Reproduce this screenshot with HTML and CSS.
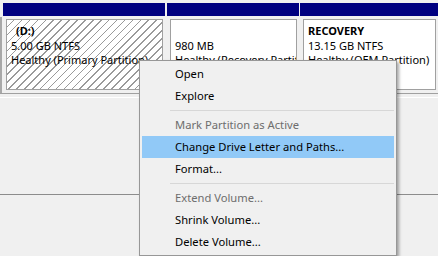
FILE: index.html
```html
<!DOCTYPE html>
<html>
<head>
<meta charset="utf-8">
<link rel="stylesheet" href="styles.css">
</head>
<body>
<div class="screen">
  <div class="disk">
    <div class="edge"></div>
    <div class="part p1">
      <div class="bar"></div>
      <div class="body">
        <div class="box hatched">
          <div class="line name indent">(D:)</div>
          <div class="line">5.00 GB NTFS</div>
          <div class="line">Healthy (Primary Partition)</div>
        </div>
      </div>
    </div>
    <div class="part p2">
      <div class="bar"></div>
      <div class="body">
        <div class="box">
          <div class="line name">&nbsp;</div>
          <div class="line">980 MB</div>
          <div class="line">Healthy (Recovery Partition)</div>
        </div>
      </div>
    </div>
    <div class="part p3">
      <div class="bar"></div>
      <div class="body">
        <div class="box">
          <div class="line name">RECOVERY</div>
          <div class="line">13.15 GB NTFS</div>
          <div class="line">Healthy (OEM Partition)</div>
        </div>
      </div>
    </div>
  </div>
  <div class="rule"></div>
  <div class="panel"></div>
  <div class="panel bottom"></div>

  <div class="menu">
    <div class="item">Open</div>
    <div class="item">Explore</div>
    <div class="sep"></div>
    <div class="item disabled">Mark Partition as Active</div>
    <div class="item active">Change Drive Letter and Paths...</div>
    <div class="item">Format...</div>
    <div class="sep"></div>
    <div class="item disabled">Extend Volume...</div>
    <div class="item">Shrink Volume...</div>
    <div class="item">Delete Volume...</div>
  </div>
</div>
</body>
</html>
```
FILE: styles.css
```css
html, body {
  margin: 0;
  padding: 0;
  background: #f0f0f0;
}
.screen {
  position: relative;
  width: 438px;
  height: 256px;
  overflow: hidden;
  font-family: "Noto Sans", "Open Sans", sans-serif;
  font-size: 11px;
  color: #000;
}
.disk {
  display: flex;
  padding-top: 3px;
  height: 90px;
  background: #f0f0f0;
}
.edge {
  width: 3px;
  margin-top: 14px;
  background: linear-gradient(90deg, #a8a8a8 0 2px, #f0f0f0 2px);
}
.part {
  display: flex;
  flex-direction: column;
}
.p1 { width: 162px; margin-right: 2px; }
.p2 { width: 132px; margin-right: 1px; }
.p3 { flex: 1; }
.bar {
  height: 13px;
  background: #000080;
}
.body {
  flex: 1;
  padding: 3px 2px 3px 3px;
  display: flex;
}
.box {
  flex: 1;
  border: 1px solid #a0a0a0;
  background: #fff;
  padding: 4px 0 0 4px;
  overflow: hidden;
  white-space: nowrap;
}
.hatched {
  background: repeating-linear-gradient(135deg, #ffffff 0 4.5px, #9a9a9a 4.5px 5.6px);
}
.line {
  line-height: 14.5px;
  height: 14.5px;
}
.name { font-weight: bold; }
.indent { padding-left: 5px; }
.rule {
  height: 3px;
  border-top: 1px solid #a0a0a0;
  border-bottom: 1px solid #ffffff;
}
.panel {
  height: 96px;
  background: #f0f0f0;
}
.panel.bottom {
  height: 60px;
  border-top: 1px solid #8c8c8c;
}
.menu {
  position: absolute;
  left: 139px;
  top: 60px;
  width: 252px;
  padding: 2px;
  background: #f0f0f0;
  border: 1px solid #979797;
  box-shadow: 2px 2px 3px rgba(0, 0, 0, 0.35);
  white-space: nowrap;
}
.item {
  height: 22px;
  line-height: 22px;
  padding-left: 33px;
  font-size: 11.2px;
}
.item.disabled { color: #6d6d6d; }
.item.active { background: #91c9f7; }
.sep {
  height: 7px;
  margin-left: 28px;
  background: linear-gradient(#d7d7d7, #d7d7d7) 0 3px / 100% 1px no-repeat;
}
```
